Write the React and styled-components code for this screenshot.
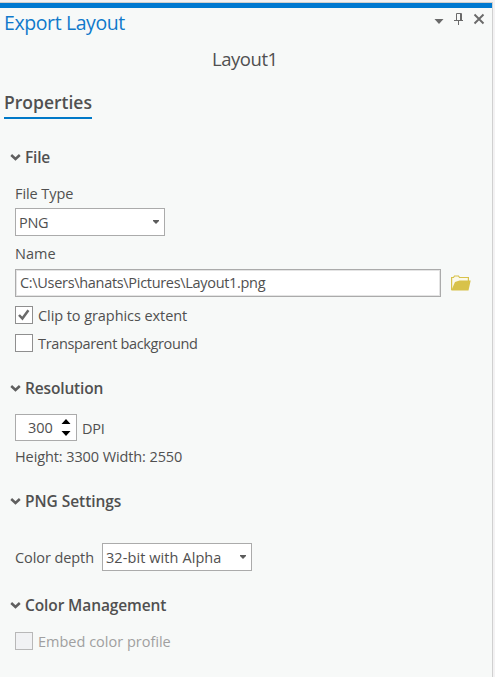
import React from "react";
import styled, { createGlobalStyle } from "styled-components";

const GlobalStyle = createGlobalStyle`
  *, *::before, *::after { box-sizing: border-box; }
  body { margin: 0; background: #f3f2f3; }
  svg { display: block; flex: none; }
`;

const Frame = styled.div`
  width: 495px;
  height: 677px;
  padding-top: 2px;
  overflow: hidden;
  background: #f3f2f3;
  font-family: "Open Sans", "Noto Sans", sans-serif;
  font-size: 14.5px;
  color: #505050;
`;

const Panel = styled.section`
  display: flex;
  flex-direction: column;
  width: 493px;
  height: 675px;
  background: #f7f9f8;
  border-top: 1px solid #d2cfcc;
  border-right: 1px solid #d0d0d0;
`;

const Accent = styled.div`
  flex: none;
  height: 5px;
  background: #0079d0;
`;

const TitleBar = styled.header`
  display: flex;
  align-items: center;
  height: 30px;
  padding: 0 6px 0 4px;
`;

const Title = styled.h1`
  flex: 1;
  margin: 0;
  font-size: 19.5px;
  font-weight: 400;
  line-height: 30px;
  letter-spacing: -0.4px;
  color: #1079cb;
`;

const LayoutName = styled.div`
  height: 43px;
  padding-left: 212px;
  font-size: 18.5px;
  line-height: 42px;
  letter-spacing: -0.45px;
`;

const Tabs = styled.nav`
  display: flex;
  height: 39px;
  padding: 8px 0 0 4px;
`;

const Tab = styled.div`
  width: 88px;
  height: 30px;
  border-bottom: 2px solid #0079c8;
  font-size: 17.5px;
  font-weight: 600;
  line-height: 26px;
  white-space: nowrap;
`;

const Section = styled.section`
  padding-top: ${(p) => p.$top}px;
`;

const SectionHeader = styled.h2`
  display: flex;
  align-items: center;
  gap: 4px;
  height: 24px;
  margin: 0;
  padding-left: 10px;
  font-size: 15.5px;
  font-weight: 600;
  line-height: 22px;
  letter-spacing: ${(p) => p.$spacing || 0}px;
`;

const SectionLabel = styled.span`
  padding-bottom: 2px;
`;

const SectionBody = styled.div`
  display: flex;
  flex-direction: column;
  padding: ${(p) => p.$top}px 0 0 15px;
`;

const Row = styled.div`
  display: flex;
  align-items: center;
  height: ${(p) => p.$height}px;
  gap: ${(p) => p.$gap || 0}px;
`;

const Text = styled.span`
  letter-spacing: ${(p) => p.$spacing || 0}px;
  line-height: 20px;
  white-space: nowrap;
`;

const LoweredText = styled(Text)`
  padding-top: 2px;
`;

const FieldLabel = styled(Text)`
  padding-bottom: 2px;
`;

const Select = styled.div`
  display: flex;
  align-items: center;
  justify-content: space-between;
  width: 150px;
  height: 28px;
  padding: 0 5px 0 3px;
  background: #fff;
  border: 1px solid #ababab;
`;

const TextField = styled.div`
  display: flex;
  align-items: center;
  width: 426px;
  height: 28px;
  padding-left: 4px;
  background: #fff;
  border: 1px solid #ababab;
  box-shadow: inset 0 0 0 1px #e4e4e4;
`;

const Stepper = styled.div`
  display: flex;
  align-items: center;
  justify-content: space-between;
  width: 62px;
  height: 27px;
  padding: 0 5px 0 12px;
  background: #fff;
  border: 1px solid #ababab;
`;

const Checks = styled.div`
  padding-top: 4px;
`;

const CheckRow = styled.label`
  display: flex;
  align-items: center;
  gap: 5px;
  height: 28px;
  color: ${(p) => (p.$disabled ? "#a0a0a0" : "inherit")};
`;

const Box = styled.span`
  display: flex;
  align-items: center;
  justify-content: center;
  width: 18px;
  height: 18px;
  background: ${(p) => (p.$disabled ? "#f1f2f4" : "#fff")};
  border: 1px solid ${(p) => (p.$disabled ? "#b8b8b8" : "#8f8f8f")};
`;

const Chevron = () => (
  <svg width="11" height="10" viewBox="0 0 11 10">
    <path d="M1.2 2 5.5 6 9.8 2" fill="none" stroke="#5f5f5f" strokeWidth="2.5" />
  </svg>
);

const DropArrow = () => (
  <svg width="6" height="5" viewBox="0 0 6 5">
    <path d="M0 0H6V1L3 4L0 1Z" fill="#5c5c5c" />
  </svg>
);

const WindowIcons = () => (
  <svg width="52" height="30" viewBox="0 0 52 30">
    <path d="M.5 11H9.5L5 16Z" fill="#6a6a6a" />
    <path d="M22.5 12V5.5H27.5V12M20 12.5H29M24.5 13V17" fill="none" stroke="#6a6a6a" />
    <path d="M26.5 5V12" stroke="#6a6a6a" />
    <path d="M40.5 6.5 49.5 15.5M49.5 6.5 40.5 15.5" stroke="#6a6a6a" strokeWidth="1.9" />
  </svg>
);

const Folder = () => (
  <svg width="20" height="16" viewBox="0 0 20 16">
    <path d="M.6 15V2.5H2.5L3.5 1H7.5L8.5 2.5H17.4V6" fill="#fbf9ea" stroke="#d8c24a" strokeWidth="1.2" />
    <path d="M.3 15.5 4 7 8.5 5.5H19.7L17.5 15.5Z" fill="#d8c24a" />
  </svg>
);

const CheckMark = () => (
  <svg width="12" height="12" viewBox="0 0 12 12">
    <path d="M1 6 4.4 9.6 10.4 1.2" fill="none" stroke="#6a6a6a" strokeWidth="2.5" />
  </svg>
);

const StepArrows = () => (
  <svg width="10" height="17" viewBox="0 0 10 17">
    <path d="M.5 5H9.5L5 0ZM.5 12H9.5L5 17Z" fill="#000" />
  </svg>
);

const Heading = ({ spacing, children }) => (
  <SectionHeader $spacing={spacing}>
    <Chevron />
    <SectionLabel>{children}</SectionLabel>
  </SectionHeader>
);

const Checkbox = ({ checked, disabled, spacing, children }) => (
  <CheckRow $disabled={disabled}>
    <Box $disabled={disabled}>{checked && <CheckMark />}</Box>
    <LoweredText $spacing={spacing}>{children}</LoweredText>
  </CheckRow>
);

export default function App() {
  return (
    <Frame>
      <GlobalStyle />
      <Panel>
        <Accent />
        <TitleBar>
          <Title>Export Layout</Title>
          <WindowIcons />
        </TitleBar>
        <LayoutName>Layout1</LayoutName>
        <Tabs>
          <Tab>Properties</Tab>
        </Tabs>
        <Section $top={26}>
          <Heading spacing={-0.2}>File</Heading>
          <SectionBody $top={14}>
            <Row $height={20}><Text $spacing={-0.08}>File Type</Text></Row>
            <Row $height={36}><Select><LoweredText $spacing={-0.3}>PNG</LoweredText><DropArrow /></Select></Row>
            <Row $height={29}><FieldLabel>Name</FieldLabel></Row>
            <Row $height={28} $gap={10}>
              <TextField><Text $spacing={-0.31}>{"C:\\Users\\hanats\\Pictures\\Layout1.png"}</Text></TextField>
              <Folder />
            </Row>
            <Checks>
              <Checkbox checked spacing={-0.07}>Clip to graphics extent</Checkbox>
              <Checkbox spacing={-0.35}>Transparent background</Checkbox>
            </Checks>
          </SectionBody>
        </Section>
        <Section $top={20}>
          <Heading spacing={-0.15}>Resolution</Heading>
          <SectionBody $top={13}>
            <Row $height={27} $gap={5}>
              <Stepper><Text>300</Text><StepArrows /></Stepper>
              <LoweredText $spacing={-0.2}>DPI</LoweredText>
            </Row>
            <Row $height={32}><Text $spacing={-0.1}>Height: 3300 Width: 2550</Text></Row>
          </SectionBody>
        </Section>
        <Section $top={17}>
          <Heading spacing={-0.05}>PNG Settings</Heading>
          <SectionBody $top={29}>
            <Row $height={28} $gap={8}>
              <LoweredText $spacing={-0.08}>Color depth</LoweredText>
              <Select><LoweredText $spacing={0.08}>32-bit with Alpha</LoweredText><DropArrow /></Select>
            </Row>
          </SectionBody>
        </Section>
        <Section $top={23}>
          <Heading spacing={-0.11}>Color Management</Heading>
          <SectionBody $top={9}>
            <Checkbox disabled>Embed color profile</Checkbox>
          </SectionBody>
        </Section>
      </Panel>
    </Frame>
  );
}
